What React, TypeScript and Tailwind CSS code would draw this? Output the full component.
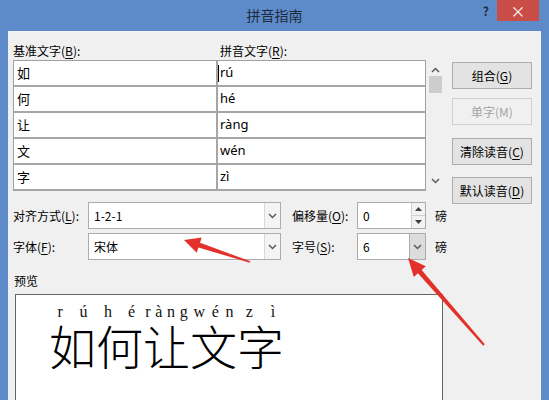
import React from "react";

function Chev({ down = true }: { down?: boolean }) {
  return (
    <svg width="9" height="6" viewBox="0 0 9 6">
      <polyline
        points={down ? "1,1 4.5,4.5 8,1" : "1,5 4.5,1.5 8,5"}
        fill="none"
        stroke="#5a5a5a"
        strokeWidth="1.5"
      />
    </svg>
  );
}

function U({ c }: { c: string }) {
  return <span className="underline underline-offset-2">{c}</span>;
}

const rows: [string, string][] = [
  ["如", "rú"],
  ["何", "hé"],
  ["让", "ràng"],
  ["文", "wén"],
  ["字", "zì"],
];

const py: string[][] = [
  ["r", "ú"],
  ["h", "é"],
  ["r", "à", "n", "g"],
  ["w", "é", "n"],
  ["z", "ì"],
];

function Combo({ text, hot = false }: { text: string; hot?: boolean }) {
  return (
    <div className="flex h-full w-full border border-[#acacac] bg-white">
      <div className="flex flex-1 items-center pl-[5px] text-[12px] text-black">{text}</div>
      <div
        className={
          hot
            ? "flex w-[16px] items-center justify-center border-l border-[#acacac] bg-[#dcdcdc]"
            : "flex w-[16px] items-center justify-center border-l border-[#d9d9d9] bg-[#f4f4f4]"
        }
      >
        <Chev />
      </div>
    </div>
  );
}

function Btn({ children, disabled = false }: { children: React.ReactNode; disabled?: boolean }) {
  return (
    <div
      className={
        disabled
          ? "flex h-[27px] w-[80px] items-center justify-center border border-[#cfcfcf] bg-[#f0f0f0] text-[12px] text-[#a3a3a3]"
          : "flex h-[27px] w-[80px] items-center justify-center border border-[#adadad] bg-[#e3e3e3] text-[12px] text-black"
      }
    >
      {children}
    </div>
  );
}

export default function App() {
  return (
    <div className="relative flex h-[400px] w-[549px] flex-col overflow-hidden bg-[#5d8bc9] px-[8px] font-['Noto_Sans_CJK_SC',sans-serif] text-black">
      {/* title bar */}
      <div className="grid h-[31px] shrink-0 grid-cols-[1fr_auto_1fr]">
        <div />
        <div className="pt-[5px] text-[14px] leading-[20px] text-[#1f2b3d]">拼音指南</div>
        <div className="flex items-start justify-end">
          <span className="mr-[8px] mt-[3px] text-[12px] font-bold leading-[16px] text-[#1f2b3d]">?</span>
          <div className="mr-[2px] flex h-[21px] w-[42px] items-center justify-center bg-[#c94d47] text-[15px] leading-none text-white">
            ×
          </div>
        </div>
      </div>

      {/* content */}
      <div className="flex min-h-0 flex-1 overflow-hidden bg-[#f0f0f0] pl-[5px] pt-[10px]">
        {/* left column */}
        <div className="flex w-[437px] shrink-0 flex-col">
          <div className="flex h-[19px] shrink-0 items-center text-[12px]">
            <span className="w-[207px]">
              基准文字(<U c="B" />):
            </span>
            <span>
              拼音文字(<U c="R" />):
            </span>
          </div>

          <div className="flex h-[131px] shrink-0">
            <div className="w-[413px] border-x border-t border-[#a0a0a0] bg-white">
              {rows.map(([a, b], i) => (
                <div key={i} className="flex h-[26px] border-b-2 border-[#a6a6a6]">
                  <div className="flex w-[204px] items-center border-r-2 border-[#a6a6a6] pl-[3px] text-[13px]">
                    {a}
                  </div>
                  <div className="flex flex-1 items-center font-['Noto_Sans',sans-serif] text-[13px]">
                    {i === 0 ? (
                      <>
                        <span className="mr-[1px] h-[17px] w-[1px] bg-black" />
                        <span>{b}</span>
                      </>
                    ) : (
                      <span className="pl-[2px]">{b}</span>
                    )}
                  </div>
                </div>
              ))}
            </div>
            <div className="ml-[1px] flex w-[16px] flex-col items-center bg-[#f0f0f0] pt-[7px]">
              <Chev down={false} />
              <div className="mt-[3px] h-[17px] w-[13px] bg-[#cdcdcd]" />
              <div className="flex-1" />
              <div className="mb-[7px]">
                <Chev />
              </div>
            </div>
          </div>

          <div className="mt-[11px] flex h-[27px] shrink-0 items-center text-[12px]">
            <span className="w-[75px]">
              对齐方式(<U c="L" />):
            </span>
            <div className="h-full w-[193px]">
              <Combo text="1-2-1" />
            </div>
            <span className="ml-[11px] w-[65px]">
              偏移量(<U c="O" />):
            </span>
            <div className="flex h-full w-[69px] border border-[#acacac] bg-white">
              <div className="flex flex-1 items-center pl-[5px] text-[12px]">0</div>
              <div className="flex w-[14px] flex-col border-l border-[#d0d0d0]">
                <div className="flex flex-1 items-center justify-center border-b border-[#d0d0d0] bg-[#f2f2f2]">
                  <svg width="7" height="4" viewBox="0 0 7 4">
                    <polygon points="0,4 3.5,0 7,4" fill="#404040" />
                  </svg>
                </div>
                <div className="flex flex-1 items-center justify-center bg-[#f2f2f2]">
                  <svg width="7" height="4" viewBox="0 0 7 4">
                    <polygon points="0,0 3.5,4 7,0" fill="#404040" />
                  </svg>
                </div>
              </div>
            </div>
            <span className="ml-[9px]">磅</span>
          </div>

          <div className="mt-[4px] flex h-[27px] shrink-0 items-center text-[12px]">
            <span className="w-[75px]">
              字体(<U c="F" />):
            </span>
            <div className="h-full w-[193px]">
              <Combo text="宋体" />
            </div>
            <span className="ml-[11px] w-[65px]">
              字号(<U c="S" />):
            </span>
            <div className="h-full w-[69px]">
              <Combo text="6" hot />
            </div>
            <span className="ml-[9px]">磅</span>
          </div>

          <div className="ml-[1px] mt-[13px] h-[16px] shrink-0 text-[12px] leading-[16px]">预览</div>

          <div className="ml-[2px] mt-[5px] h-[120px] w-[428px] shrink-0 border border-[#646464] bg-white pl-[33px] pt-[8px]">
            <div className="flex h-[18px] w-[235px] font-['Liberation_Serif',serif] text-[16px] leading-[18px] text-[#111]">
              {py.map((letters, i) => (
                <div key={i} className="flex w-[47px] justify-around">
                  {letters.map((l, j) => (
                    <span key={j}>{l}</span>
                  ))}
                </div>
              ))}
            </div>
            <div className="h-[47px] text-[47px] font-light leading-[47px] text-black">如何让文字</div>
          </div>
        </div>

        {/* right column buttons */}
        <div className="ml-[2px] flex w-[80px] shrink-0 flex-col pt-[21px]">
          <Btn>
            组合(<U c="G" />)
          </Btn>
          <div className="mt-[9px]">
            <Btn disabled>单字(M)</Btn>
          </div>
          <div className="mt-[13px]">
            <Btn>
              清除读音(<U c="C" />)
            </Btn>
          </div>
          <div className="mt-[12px]">
            <Btn>
              默认读音(<U c="D" />)
            </Btn>
          </div>
        </div>
      </div>

      {/* red annotation arrows */}
      <svg className="pointer-events-none absolute left-0 top-0" width="549" height="400" viewBox="0 0 549 400">
        <polygon
          points="184,240 201.7,237.5 200,242.7 250.2,261.3 249.8,262.7 198.4,247.5 196.7,252.7"
          fill="#e2312b"
        />
        <polygon
          points="408,258 425.8,266.3 421.7,270 484.8,344.3 483.2,345.7 417.9,273.2 413.8,276.9"
          fill="#e2312b"
        />
      </svg>
    </div>
  );
}
